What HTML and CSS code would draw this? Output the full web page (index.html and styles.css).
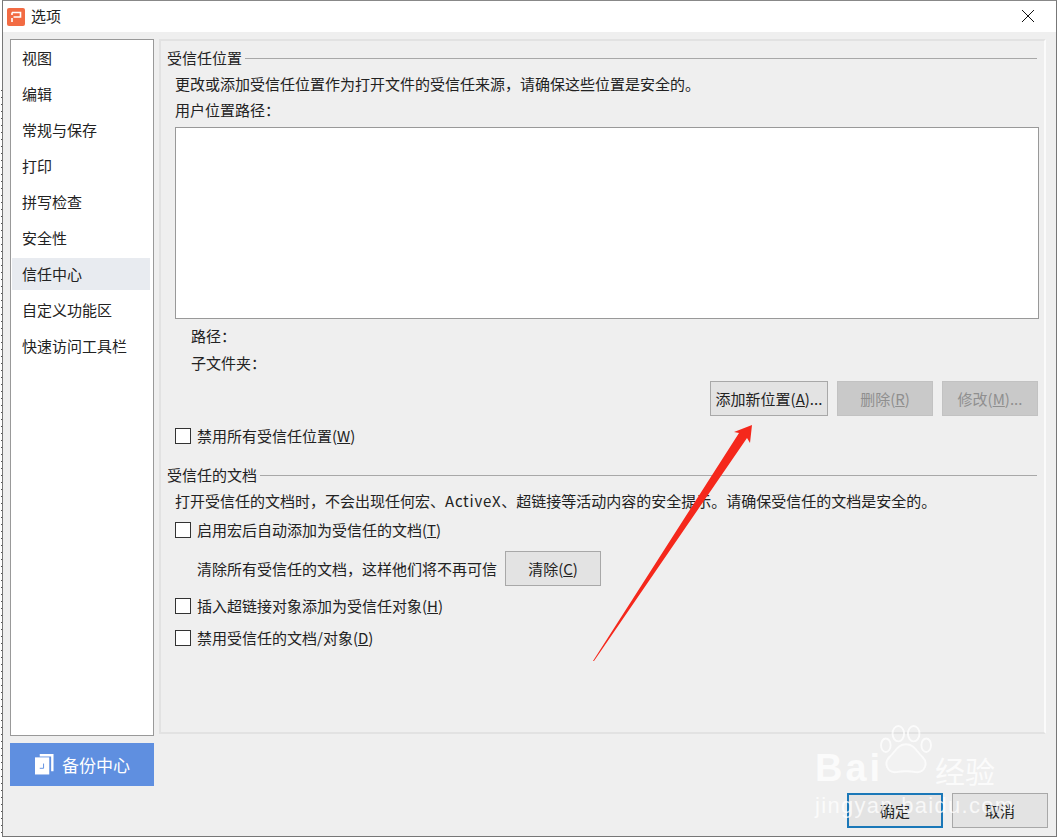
FILE: index.html
```html
<!DOCTYPE html>
<html lang="zh-CN">
<head>
<meta charset="utf-8">
<title>选项</title>
<link rel="stylesheet" href="styles.css">
</head>
<body>
<div class="window">
  <header class="titlebar">
    <svg class="app-icon" viewBox="0 0 18 18"><rect width="18" height="18" rx="2" fill="#f26b43"/><path d="M5 4.500H13.500V9H6.500M5 4.500V7M5 10V14" fill="none" stroke="#fff" stroke-width="1.600"/></svg>
    <span class="title">选项</span>
    <svg class="close" viewBox="0 0 14 14"><path d="M1 1l12 12M13 1L1 13" stroke="#111" stroke-width="1" fill="none"/></svg>
  </header>
  <div class="body">
    <aside class="side">
      <ul class="nav">
        <li>视图</li><li>编辑</li><li>常规与保存</li><li>打印</li><li>拼写检查</li><li>安全性</li>
        <li class="active">信任中心</li><li>自定义功能区</li><li>快速访问工具栏</li>
      </ul>
      <div class="backup">
        <svg class="backup-icon" viewBox="0 0 20 22"><path d="M5 0h14.500v18H17V2.500H5z" fill="#fff"/><rect x="0" y="3.500" width="15" height="18" fill="#fff"/><path d="M9 10v5H5" fill="none" stroke="#5f8fe0" stroke-width="1"/></svg>
        <span>备份中心</span>
      </div>
    </aside>
    <main class="panel">
      <div class="legend"><span>受信任位置</span><i></i></div>
      <div class="indent">
        <p class="line-a">更改或添加受信任位置作为打开文件的受信任来源，请确保这些位置是安全的。</p>
        <p class="line-b">用户位置路径：</p>
        <div class="pathbox"></div>
        <p class="info first">路径：</p>
        <p class="info">子文件夹：</p>
        <div class="actions">
          <button class="btn add">添加新位置(<u>A</u>)...</button>
          <button class="btn off">删除(<u>R</u>)</button>
          <button class="btn off">修改(<u>M</u>)...</button>
        </div>
        <label class="check disable-all"><b></b>禁用所有受信任位置(<u>W</u>)</label>
      </div>
      <div class="legend second"><span>受信任的文档</span><i></i></div>
      <div class="indent">
        <p class="line-c">打开受信任的文档时，不会出现任何宏、<span class="latin">ActiveX</span>、超链接等活动内容的安全提示。请确保受信任的文档是安全的。</p>
        <label class="check auto"><b></b>启用宏后自动添加为受信任的文档(<u>T</u>)</label>
        <div class="clear-row"><span>清除所有受信任的文档，这样他们将不再可信</span><button class="btn clear">清除(<u>C</u>)</button></div>
        <label class="check link"><b></b>插入超链接对象添加为受信任对象(<u>H</u>)</label>
        <label class="check doc"><b></b>禁用受信任的文档/对象(<u>D</u>)</label>
      </div>
    </main>
  </div>
  <footer class="foot">
    <button class="btn ok">确定</button>
    <button class="btn cancel">取消</button>
  </footer>
</div>
<svg class="arrow" viewBox="0 0 1059 839"><path d="M593 661L739 433L734 432L752 425L750 443L747 438L594 661Z" fill="#f5281c"/></svg>
<div class="mark">
  <div class="mark-top"><span class="bai">Bai</span><svg class="paw" viewBox="0 0 60 52"><g fill="none" stroke="#fff" stroke-width="2"><ellipse cx="22" cy="9" rx="6" ry="8"/><ellipse cx="38" cy="9" rx="6" ry="8"/><ellipse cx="9" cy="21" rx="5" ry="7"/><ellipse cx="51" cy="21" rx="5" ry="7"/><path d="M30 20c-9 0-11 8-17 13-7 7-2 17 7 16 6-1 14-1 20 0 9 1 14-9 7-16-6-5-8-13-17-13z" fill="#fff" fill-opacity=".35"/></g></svg><span class="jy">经验</span></div>
  <div class="mark-url">jingyan.baidu.com</div>
</div>
</body>
</html>
```
FILE: styles.css
```css
* { box-sizing: border-box; }
html, body { margin: 0; padding: 0; }
body {
  width: 1059px; height: 839px; overflow: hidden; position: relative;
  background: repeating-linear-gradient(to bottom, #555 0 1px, #fff 1px 7px) 1px 90px / 1px 100% no-repeat #fff;
  font: 15px/20px "Noto Sans CJK SC", "Noto Sans", sans-serif; color: #222;
}
p { margin: 0; }
button { font: inherit; color: inherit; padding: 0; }
.window {
  width: 1055px; height: 837px; margin-left: 2px; background: #efefef;
  border: 1px solid #777; border-top-color: #888;
  display: flex; flex-direction: column;
}
.titlebar { height: 31px; background: #fff; display: flex; align-items: center; padding: 0 21px 2px 4px; flex: none; }
.app-icon { width: 18px; height: 18px; margin-top: 2px; }
.title { margin-left: 6px; font-size: 15px; }
.close { width: 14px; height: 14px; margin-left: auto; }
.body { display: flex; padding: 7px 9px 0 7px; gap: 5px; flex: none; }
.side { width: 144px; display: flex; flex-direction: column; gap: 7px; }
.nav { list-style: none; margin: 0; padding: 2px 3px 0 1px; height: 697px; background: #fff; border: 1px solid #999; }
.nav li { height: 32px; line-height: 32px; margin-bottom: 4px; padding-left: 10px; }
.nav .active { background: #e8ebf0; }
.backup { height: 43px; background: #5f8fe0; color: #fff; display: flex; align-items: center; padding-left: 25px; gap: 8px; font-size: 17px; }
.backup-icon { width: 19px; height: 21px; }
.panel { width: 887px; height: 695px; border: 2px solid #fbfbfb; border-color: #e2e2e2 #fbfbfb #e2e2e2 #e2e2e2; padding: 7px 7px 0 6px; }
.legend { display: flex; align-items: center; gap: 3px; height: 20px; }
.legend i { flex: 1; height: 1px; background: #a8a8a8; margin-top: 0; }
.second { margin-top: 19px; }
.indent { padding-left: 8px; }
.line-a { margin-top: 6px; }
.line-b { margin-top: 6px; }
.pathbox { width: 864px; height: 192px; margin-top: 7px; background: #fff; border: 1px solid #999; }
.info { padding-left: 16px; margin-top: 7px; }
.actions { display: flex; justify-content: flex-end; gap: 9px; margin-top: 8px; width: 863px; }
.btn { height: 35px; background: #e3e3e3; border: 1px solid #a8a8a8; }
.add { width: 118px; font-size: 15px; white-space: nowrap; }
.off { width: 96px; background: #c9c9c9; border-color: #c2c2c2; color: #8f8f8f; }
.check { display: flex; align-items: center; height: 20px; }
.check b { width: 16px; height: 16px; background: #fff; border: 1px solid #333; margin-right: 6px; flex: none; }
.disable-all { margin-top: 10px; }
.line-c { margin-top: 6px; white-space: nowrap; }
.latin { letter-spacing: .75px; }
.auto { margin-top: 9px; }
.clear-row { display: flex; align-items: center; margin-top: 11px; padding-left: 22px; height: 35px; }
.clear { width: 96px; margin-left: 8px; }
.link { margin-top: 10px; }
.doc { margin-top: 12px; }
.foot { display: flex; justify-content: flex-end; gap: 9px; padding: 7px 8px 0 0; flex: none; }
.ok { width: 96px; height: 35px; border: 2px solid #1b78b8; }
.cancel { width: 96px; height: 35px; }
.arrow { position: absolute; left: 0; top: 0; width: 1059px; height: 839px; pointer-events: none; }
.mark { position: absolute; left: 815px; top: 725px; width: 190px; color: #fff; opacity: .75; pointer-events: none; }
.mark-top { display: flex; align-items: flex-end; height: 62px; }
.bai { font: 700 38px/38px "Liberation Sans", sans-serif; letter-spacing: 3px; width: 62px; flex: none; }
.paw { width: 58px; height: 50px; margin-bottom: 12px; flex: none; }
.jy { font-size: 30px; line-height: 42px; margin-bottom: -4px; flex: none; }
.mark-url { font: 22px/26px "Liberation Sans", sans-serif; letter-spacing: 1.300px; margin-top: 6px; white-space: nowrap; }
```
